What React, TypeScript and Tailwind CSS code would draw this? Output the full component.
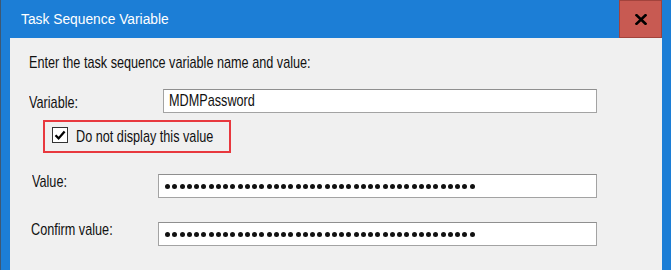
import type { ReactNode } from "react"

// Text in the screenshot is horizontally squashed, so glyphs are scaled on x
function Txt({ children, className = "" }: { children: ReactNode; className?: string }) {
  return (
    <span className={`inline-block origin-left scale-x-[0.745] whitespace-nowrap ${className}`}>{children}</span>
  )
}

function Dots({ count }: { count: number }) {
  return (
    <div className="flex items-center gap-[2.25px]">
      {Array.from({ length: count }).map((_, i) => (
        <span key={i} className="w-[5px] h-[5px] rounded-full bg-[#111]" />
      ))}
    </div>
  )
}

export default function App() {
  return (
    <div className="w-[671px] h-[270px] overflow-hidden flex flex-col bg-[#1c7ed6] border-l border-[#3d5873] font-['Liberation_Sans',Arial,sans-serif]">
      {/* Title bar */}
      <div className="h-[38px] flex items-start justify-between shrink-0">
        <div className="h-[38px] flex items-center pl-[20px]">
          <span className="inline-block origin-left scale-x-[0.89] whitespace-nowrap text-white text-[15.5px] leading-[20px]">
            Task Sequence Variable
          </span>
        </div>
        <button className="w-[43px] h-[38px] mr-[9px] bg-[#c85a52] border border-[#a2433c] flex items-center justify-center">
          <svg width="12" height="11" viewBox="0 0 12 11">
            <path d="M1.5 1.2 L10.5 9.8 M10.5 1.2 L1.5 9.8" stroke="#000" strokeWidth="2.6" strokeLinecap="square" />
          </svg>
        </button>
      </div>

      {/* Body */}
      <div className="flex-1 ml-[9px] mr-[9px] bg-[#f0f0f0] text-[17px] leading-[20px] text-[#111]">
        <div className="pt-[15px] pl-[19px]">
          <Txt>Enter the task sequence variable name and value:</Txt>
        </div>

        <div className="mt-[16px] pl-[19px] flex items-start">
          <div className="w-[134px] pt-[4px]">
            <Txt>Variable:</Txt>
          </div>
          <div className="w-[434px] h-[24px] bg-white border border-[#a3a3a3] border-t-[#8f8f8f] flex items-center pl-[5px]">
            <Txt>MDMPassword</Txt>
          </div>
        </div>

        <div className="mt-[7px] ml-[33px] w-[188px] h-[33px] border-2 border-[#e8383e] flex items-start pl-[7px] pt-[5px]">
          <div className="w-[16px] h-[16px] shrink-0 bg-white border border-[#333] flex items-center justify-center">
            <svg width="12" height="12" viewBox="0 0 12 12">
              <path d="M1.5 6.2 L4.6 9.4 L10.6 2.4" fill="none" stroke="#000" strokeWidth="2.3" />
            </svg>
          </div>
          <div className="ml-[8px]">
            <Txt>Do not display this value</Txt>
          </div>
        </div>

        <div className="mt-[21px] pl-[22px] flex items-start">
          <div className="w-[126px] -mt-[2px]">
            <Txt>Value:</Txt>
          </div>
          <div className="w-[439px] h-[24px] bg-white border border-[#a3a3a3] border-t-[#8f8f8f] flex items-center pl-[6px]">
            <Dots count={43} />
          </div>
        </div>

        <div className="mt-[24px] pl-[21px] flex items-start">
          <div className="w-[127px] -mt-[2px]">
            <Txt>Confirm value:</Txt>
          </div>
          <div className="w-[439px] h-[24px] bg-white border border-[#a3a3a3] border-t-[#8f8f8f] flex items-center pl-[6px]">
            <Dots count={43} />
          </div>
        </div>
      </div>
    </div>
  )
}
